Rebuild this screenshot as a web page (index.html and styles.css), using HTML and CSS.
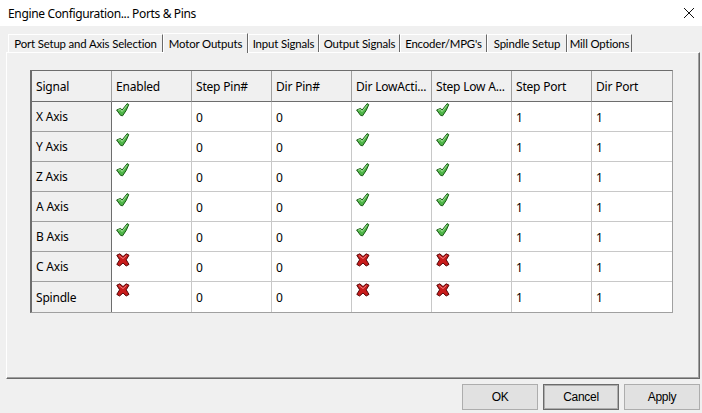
FILE: index.html
```html
<!DOCTYPE html>
<html>
<head>
<meta charset="utf-8">
<link rel="stylesheet" href="styles.css">
</head>
<body>
<div class="dialog">
  <div class="titlebar">
    <span class="title">Engine Configuration... Ports &amp; Pins</span>
    <svg class="close" width="12" height="12" viewBox="0 0 12 12"><path d="M1 1 L11 11 M11 1 L1 11" stroke="#111" stroke-width="1" fill="none"/></svg>
  </div>
  <div class="tabs">
    <div class="tab w1">Port Setup and Axis Selection</div>
    <div class="tab w2 active">Motor Outputs</div>
    <div class="tab w3">Input Signals</div>
    <div class="tab w4">Output Signals</div>
    <div class="tab w5">Encoder/MPG's</div>
    <div class="tab w6">Spindle Setup</div>
    <div class="tab w7">Mill Options</div>
  </div>
  <div class="panel">
    <table class="grid">
      <thead>
        <tr>
          <th>Signal</th><th>Enabled</th><th>Step Pin#</th><th>Dir Pin#</th><th>Dir LowActi...</th><th>Step Low A...</th><th>Step Port</th><th>Dir Port</th>
        </tr>
      </thead>
      <tbody id="rows"></tbody>
    </table>
  </div>
  <div class="buttons">
    <button class="btn">OK</button>
    <button class="btn default">Cancel</button>
    <button class="btn">Apply</button>
  </div>
</div>
<script src="app.js"></script>
</body>
</html>
```
FILE: app.js
```js
const ok = '<svg class="ico" width="14" height="14" viewBox="0 0 14 14"><path d="M0.6 7 L4.6 5.4 L6 7.2 L11.2 0.6 L12.8 1.6 L10.2 7.4 L6.6 12.8 L4.6 12.4 Z" fill="#4fb548" stroke="#1b5a18" stroke-width="1" stroke-linejoin="round"/><path d="M2.2 7.2 L4.6 6.4 L6 8.6 L11.2 2" stroke="#a4e699" stroke-width="1" fill="none"/></svg>';
const no = '<svg class="ico" width="14" height="14" viewBox="0 0 14 14"><path d="M0.8 2.2 L3.8 0.8 L7 3.6 L10.2 0.8 L13 2.2 L10.2 6.8 L13 11.4 L10.2 13 L7 10 L3.6 13 L0.8 11.4 L3.6 6.8 Z" fill="#c81c1c" stroke="#560606" stroke-width="1" stroke-linejoin="round"/><path d="M2.8 2.4 L7 5.6 L10.4 2.6" stroke="#ec7a7a" stroke-width="1" fill="none"/></svg>';
const rows = [
  ['X Axis', 1], ['Y Axis', 1], ['Z Axis', 1], ['A Axis', 1], ['B Axis', 1], ['C Axis', 0], ['Spindle', 0]
];
document.getElementById('rows').innerHTML = rows.map(([n, e]) => {
  const i = e ? ok : no;
  return `<tr><th class="rh">${n}</th><td class="ic">${i}</td><td>0</td><td>0</td><td class="ic">${i}</td><td class="ic">${i}</td><td>1</td><td>1</td></tr>`;
}).join('');
```
FILE: styles.css
```css
html, body {
  margin: 0;
  padding: 0;
  background: #f0f0f0;
}
.dialog {
  width: 702px;
  height: 413px;
  font-family: "Noto Sans", "DejaVu Sans", sans-serif;
  font-size: 12px;
  color: #000;
  display: flex;
  flex-direction: column;
}
.titlebar {
  height: 26px;
  background: #fff;
  display: flex;
  align-items: center;
  justify-content: space-between;
  padding: 0 7px 0 8px;
}
.title {
  font-size: 12px;
  letter-spacing: -0.35px;
}
.tabs {
  display: flex;
  padding: 7px 0 0 8px;
  height: 19px;
  align-items: flex-end;
}
.tab {
  height: 18px;
  box-sizing: border-box;
  border-top: 1px solid #fff;
  border-left: 1px solid #fff;
  border-right: 1px solid #696969;
  font-family: "Lato", "Noto Sans", sans-serif;
  font-size: 11.4px;
  letter-spacing: -0.15px;
  display: flex;
  align-items: center;
  justify-content: center;
  white-space: nowrap;
}
.tab.active {
  height: 20px;
  margin-bottom: -1px;
  position: relative;
  z-index: 1;
  background: #f0f0f0;
}
.w1 { width: 155px; }
.w2 { width: 85px; }
.w3 { width: 71px; }
.w4 { width: 81px; }
.w5 { width: 87px; }
.w6 { width: 80px; }
.w7 { width: 65px; }
.panel {
  margin: 0 2px 0 6px;
  height: 327px;
  box-sizing: border-box;
  border-top: 1px solid #fff;
  border-left: 1px solid #fff;
  border-right: 1px solid #696969;
  border-bottom: 1px solid #696969;
  box-shadow: inset -1px -1px 0 #a0a0a0;
  padding: 17px 0 0 23px;
}
.grid {
  border-collapse: separate;
  border-spacing: 0;
  table-layout: fixed;
  width: 641px;
  border-top: 1px solid #6d6d6d;
  border-left: 2px solid #6d6d6d;
  border-right: 1px solid #a0a0a0;
  border-bottom: 1px solid #a0a0a0;
  background: #fff;
  letter-spacing: -0.2px;
}
.grid th, .grid td {
  width: 80px;
  box-sizing: border-box;
  padding: 0 0 0 4px;
  text-align: left;
  font-weight: normal;
  white-space: nowrap;
  overflow: hidden;
}
.grid thead th {
  height: 31px;
  background: #f0f0f0;
  border-right: 1px solid #a0a0a0;
  border-bottom: 1px solid #6d6d6d;
  padding-top: 0;
}
.grid thead th:last-child { border-right: 0; }
.grid td {
  height: 30px;
  border-right: 1px solid #c8c8c8;
  border-bottom: 1px solid #c8c8c8;
  padding-top: 1px;
}
.grid td:last-child { border-right: 0; }
.grid tbody tr:last-child td,
.grid tbody tr:last-child th { border-bottom: 0; }
.grid th.rh {
  height: 30px;
  background: #f0f0f0;
  border-right: 1px solid #6d6d6d;
  border-bottom: 1px solid #a0a0a0;
  padding-top: 0;
}
.grid td.ic {
  vertical-align: top;
  padding: 1px 0 0 4px;
}
.ico { display: block; }
.buttons {
  display: flex;
  justify-content: flex-end;
  gap: 5px;
  padding: 5px 2px 0 0;
}
.btn {
  width: 76px;
  height: 26px;
  margin: 0;
  box-sizing: border-box;
  background: #e1e1e1;
  border: 1px solid #adadad;
  font-family: "Liberation Sans", Arial, sans-serif;
  font-size: 12px;
  color: #000;
  padding: 0;
  letter-spacing: -0.3px;
}
.btn.default {
  border: 1px solid #6b6b6b;
  box-shadow: inset 0 0 0 1px #adadad;
}
```
